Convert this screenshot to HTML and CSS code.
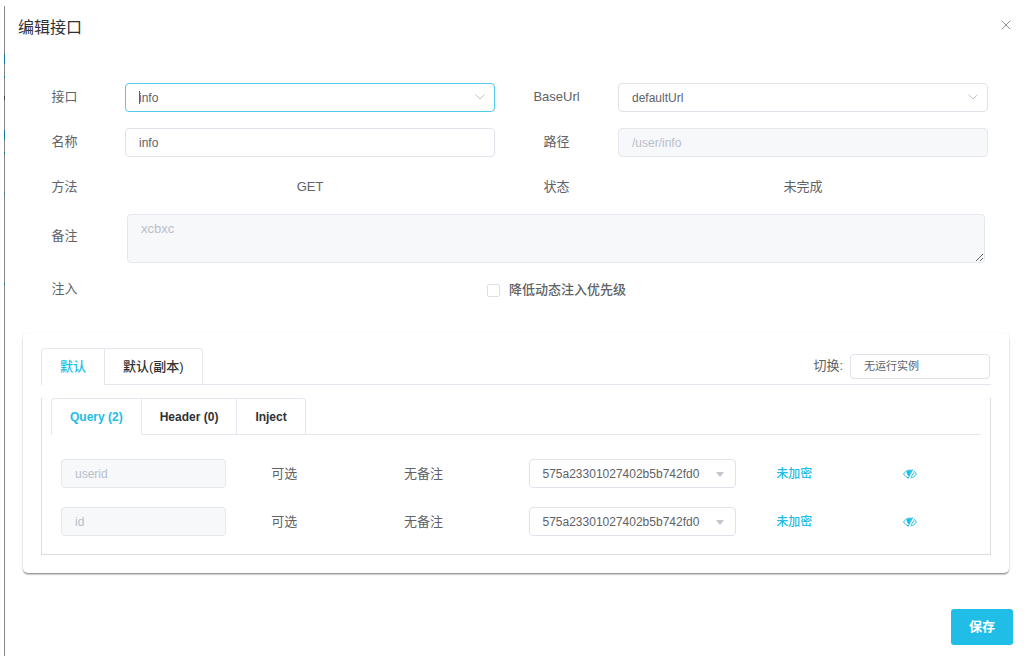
FILE: index.html
```html
<!DOCTYPE html>
<html lang="zh-CN">
<head>
<meta charset="utf-8">
<title>编辑接口</title>
<meta name="viewport" content="width=device-width, initial-scale=1">
<link rel="stylesheet" href="styles.css">
</head>
<body>
<svg class="sprite" aria-hidden="true">
  <symbol id="chevron" viewBox="0 0 12 12"><path d="M1.500 3.500 6 8l4.500-4.500" fill="none" stroke="currentColor"/></symbol>
  <symbol id="caret" viewBox="0 0 8 5"><path d="M0 0h8L4 5z" fill="currentColor"/></symbol>
  <symbol id="eye" viewBox="0 0 14 10">
    <path d="M5.600 8.800C3.300 8.300 1.500 6.600.6 5 1.900 2.700 4.200 1.100 7 1.100c.7 0 1.300.1 1.900.3M10.700 2.100c1.200.7 2.100 1.700 2.700 2.900-1.200 2.200-3.300 3.700-5.800 3.900" fill="none" stroke="currentColor"/>
    <path d="M3.800 2.300 8.900 1.200 5.700 7.200C4.100 6.200 3.200 4.400 3.800 2.300z" fill="currentColor"/>
    <path d="M9.800.4 4.900 9.600M11 3.300 8.200 7.800" fill="none" stroke="currentColor"/>
  </symbol>
</svg>
<main class="drawer">
  <header class="drawer-header">
    <h1 class="title">编辑接口</h1>
    <button class="close" type="button" aria-label="关闭"><svg viewBox="0 0 10 10"><path d="m.8.8 8.400 8.400M9.200.8.8 9.200" fill="none" stroke="currentColor"/></svg></button>
  </header>

  <form class="form">
    <div class="fields">
      <label class="label" for="api">接口</label>
      <div class="control focused">
        <input class="input" id="api" type="text" value="info">
        <span class="text-cursor"></span>
        <svg class="chevron"><use href="#chevron"/></svg>
      </div>
      <label class="label" for="base">BaseUrl</label>
      <div class="control">
        <select class="input" id="base"><option>defaultUrl</option></select>
        <svg class="chevron"><use href="#chevron"/></svg>
      </div>
      <label class="label" for="name">名称</label>
      <div class="control"><input class="input" id="name" type="text" value="info"></div>
      <label class="label" for="path">路径</label>
      <div class="control"><input class="input" id="path" type="text" value="/user/info" disabled></div>
      <span class="label">方法</span>
      <span class="label">GET</span>
      <span class="label">状态</span>
      <span class="label">未完成</span>
    </div>
    <div class="fields wide">
      <label class="label remark-label" for="remark">备注</label>
      <textarea class="input remark" id="remark" disabled>xcbxc</textarea>
      <span class="label">注入</span>
      <label class="check"><input class="box" type="checkbox">降低动态注入优先级</label>
    </div>
  </form>

  <section class="card">
    <div class="tab-bar">
      <div class="tabs" role="tablist">
        <button class="tab active" type="button" role="tab" aria-selected="true">默认</button>
        <button class="tab" type="button" role="tab">默认(副本)</button>
      </div>
      <div class="switch">
        <label for="instance">切换:</label>
        <select class="input small" id="instance"><option>无运行实例</option></select>
      </div>
    </div>
    <div class="panel">
      <div class="tab-bar">
        <div class="tabs latin" role="tablist">
          <button class="tab active" type="button" role="tab" aria-selected="true">Query (2)</button>
          <button class="tab" type="button" role="tab">Header (0)</button>
          <button class="tab" type="button" role="tab">Inject</button>
        </div>
      </div>
      <div class="params">
        <div class="param">
          <input class="input" type="text" value="userid" aria-label="参数名" disabled>
          <span>可选</span>
          <span>无备注</span>
          <div class="control">
            <select class="input" aria-label="userid"><option>575a23301027402b5b742fd0</option></select>
            <svg class="caret"><use href="#caret"/></svg>
          </div>
          <button class="link" type="button">未加密</button>
          <button class="link" type="button" aria-label="隐藏"><svg class="eye"><use href="#eye"/></svg></button>
        </div>
        <div class="param">
          <input class="input" type="text" value="id" aria-label="参数名" disabled>
          <span>可选</span>
          <span>无备注</span>
          <div class="control">
            <select class="input" aria-label="id"><option>575a23301027402b5b742fd0</option></select>
            <svg class="caret"><use href="#caret"/></svg>
          </div>
          <button class="link" type="button">未加密</button>
          <button class="link" type="button" aria-label="隐藏"><svg class="eye"><use href="#eye"/></svg></button>
        </div>
      </div>
    </div>
  </section>

  <footer class="footer"><button class="save" type="button">保存</button></footer>
</main>
</body>
</html>
```
FILE: styles.css
```css
* { box-sizing: border-box; }

body {
  margin: 0;
  padding: 6px 0 10px 4px;
  background: #fff;
  color: #606266;
  font: 13px/20px "Liberation Sans", "Noto Sans CJK SC", sans-serif;
}

button, input, select, textarea { font: inherit; color: inherit; margin: 0; }
button { background: none; border: 0; padding: 0; cursor: pointer; }

.sprite { display: none; }

.drawer {
  padding: 0 13px 11px 0;
  /* sliver of the dimmed page behind the drawer's edge */
  background: linear-gradient(#888 0 48px, #16789a 48px 58px, #888 58px 70px, #16789a 70px 72px, #888 72px 90px, #444 90px 94px, #888 94px 124px, #16789a 124px 134px, #888 134px 146px, #16789a 146px 148px, #888 148px 186px, #5a8090 186px 190px, #888 190px 277px, #347c94 277px 279px, #888 279px) left top / 1px 100% no-repeat;
}

.drawer-header {
  display: flex;
  justify-content: space-between;
  align-items: flex-start;
  padding: 11px 2px 0 14px;
}
.title { margin: 0; font-size: 16px; line-height: 22px; font-weight: 400; color: #303133; }
.close { display: grid; place-items: center; width: 10px; height: 16px; color: #909399; }
.close svg { width: 10px; height: 10px; }

.form { padding: 44px 25px 0 0; }
.fields {
  display: grid;
  grid-template-columns: 121fr 370fr 123fr 370fr;
  grid-auto-rows: 29px;
  row-gap: 16px;
  align-items: center;
}
.fields.wide {
  grid-template-columns: 121fr 863fr;
  grid-auto-rows: auto;
  row-gap: 17px;
  margin-top: 12px;
}
.label { text-align: center; line-height: 18px; padding-bottom: 2px; }
.remark-label { padding-bottom: 5px; }

.control { position: relative; }
.input {
  display: block;
  width: 100%;
  height: 29px;
  padding: 0 13px;
  border: 1px solid #dfe2e9;
  border-radius: 4px;
  background: #fff;
  font-size: 12px;
  line-height: 18px;
  outline: 0;
  appearance: none;
}
.input:disabled { background: #f6f8fa; border-color: #e4e7ed; color: #b8bfcc; opacity: 1; }
.focused .input { border-color: #4fcbec; }
.text-cursor { position: absolute; left: 14px; top: 8px; width: 1px; height: 13px; background: #606266; }
.chevron { position: absolute; right: 9px; top: 8px; width: 12px; height: 12px; color: #c0c4cc; pointer-events: none; }
.caret { position: absolute; right: 12px; top: 13px; width: 8px; height: 5px; color: #c0c4cc; pointer-events: none; }

.remark { width: auto; height: 49px; margin: 0 3px 0 2px; padding: 5px 13px; font-size: 13px; resize: vertical; }

.check { display: flex; align-items: center; justify-content: center; gap: 9px; font-weight: 500; }
.box {
  width: 13px;
  height: 13px;
  border: 1px solid #dcdfe6;
  border-radius: 2px;
  background: #fff;
  appearance: none;
}

.card {
  margin: 33px 4px 0 19px;
  padding: 15px 18px 18px;
  border-radius: 5px;
  background: #fff;
  box-shadow: 0 2px 2px -1px #888, 0 1px 2px rgba(0, 0, 0, .25);
}

.tab-bar {
  display: flex;
  justify-content: space-between;
  border-bottom: 1px solid #e4e7ed;
}
.tabs {
  display: flex;
  margin-bottom: -1px;
  border: 1px solid #e4e7ed;
  border-bottom: 0;
  border-radius: 4px 4px 0 0;
  font-weight: 500;
}
.tabs.latin { font-size: 12px; font-weight: 700; }
.tab {
  height: 36px;
  padding: 0 18px;
  border-bottom: 1px solid #e4e7ed;
  color: #303133;
}
.tab + .tab { border-left: 1px solid #e4e7ed; }
.tab.active { border-bottom-color: #fff; color: #20bde7; border-top-left-radius: 3px; }

.switch { display: flex; align-items: center; gap: 7px; padding-right: 1px; }
.small { width: 140px; height: 25px; font-size: 11px; }

.panel {
  margin-top: 13px;
  padding: 0 9px 18px;
  border: 1px solid #dcdfe0;
  border-top: 0;
}

.params { display: grid; gap: 19px; padding: 24px 13px 0 10px; }
.param {
  display: grid;
  grid-template-columns: 165fr 116fr 162fr 24fr 207fr 117fr 115fr;
  align-items: center;
  justify-items: center;
}
.param .control { grid-column: 5; width: 100%; }
.link { color: #20bde7; font-size: 12px; font-weight: 500; }
.eye { display: block; width: 14px; height: 10px; }

.footer { display: flex; justify-content: flex-end; padding-top: 36px; }
.save {
  width: 62px;
  height: 36px;
  border-radius: 3px;
  background: #20bde7;
  color: #fff;
  font-weight: 700;
}
```
